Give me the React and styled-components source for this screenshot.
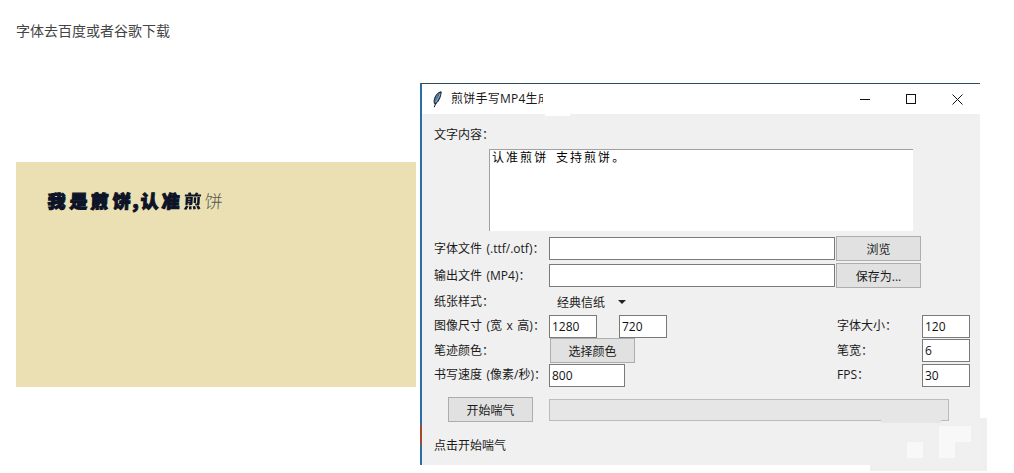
import React from "react";
import styled, { createGlobalStyle } from "styled-components";

const Global = createGlobalStyle`
  html, body { margin: 0; padding: 0; background: #fff; }
  body { font-family: "Open Sans", "Noto Sans CJK SC", sans-serif; overflow: hidden; }
  * { box-sizing: border-box; }
`;
const Page = styled.div`
  position: relative;
  width: 1014px;
  height: 473px;
  padding: 21px 0 0 16px;
  overflow: hidden;
`;
const Heading = styled.div`
  height: 18px;
  font: 14px/18px "Noto Sans CJK SC", sans-serif;
  color: #444;
`;
const Main = styled.div`
  display: flex;
  align-items: flex-start;
  gap: 4px;
  margin-top: 44px;
`;
const Paper = styled.div`
  width: 400px;
  height: 225px;
  margin-top: 79px;
  background: #ebe0b3;
  padding: 26px 0 0 27px;
  display: flex;
  font: 18px/24px "Noto Sans CJK SC", sans-serif;
  color: #0d1428;
`;
const Stroke = styled.span`
  display: inline-block;
  width: ${p => p.$w || 21.5}px;
  transform: skewX(-3deg);
  font-weight: ${p => (p.$kind === "thin" ? 300 : 900)};
  -webkit-text-stroke: ${p => (p.$kind === "heavy" ? "1.1px #0d1428" : "0")};
  ${p => p.$kind === "thin" && "color: #5a5a50;"}
  ${p => p.$kind === "partial" && `
    background: linear-gradient(to bottom, #0d1428 60%, #6b6a5c 60%);
    -webkit-background-clip: text;
    background-clip: text;
    color: transparent;
  `}
`;
const Win = styled.div`
  width: 560px;
  height: 382px;
  border-top: 1px solid #2c4c66;
  border-left: 2px solid #2a6ea6;
  background: #f0f0f0;
  font-size: 12px;
  color: #1a1a1a;
`;
const TitleBar = styled.div`
  height: 30px;
  background: #fff;
  display: flex;
  align-items: center;
  padding-left: 11px;
`;
const TitleText = styled.div`
  width: 92px;
  margin-left: 9px;
  overflow: hidden;
  white-space: nowrap;
  font-size: 12px;
  line-height: 16px;
  letter-spacing: 0.25px;
`;
const Controls = styled.div`
  margin-left: auto;
  display: flex;
`;
const Ctl = styled.svg`
  display: block;
  width: 46px;
  height: 30px;
  fill: none;
  stroke: #111;
  stroke-width: 1;
`;
const Body = styled.div`
  display: flex;
  flex-direction: column;
  padding: 12px 10px 0 12px;
`;
const Row = styled.div`
  display: flex;
  align-items: center;
  height: ${p => p.$h || 25}px;
  margin-top: ${p => p.$mt || 0}px;
`;
const Label = styled.div`
  flex: none;
  width: ${p => p.$w || 115}px;
  white-space: nowrap;
  font-size: 12px;
  line-height: 16px;
  word-spacing: 1.4px;
`;
const TextBox = styled.div`
  width: 424px;
  height: 82px;
  margin: 5px 0 0 55px;
  background: #fff;
  border-top: 1px solid #a0a0a0;
  border-left: 1px solid #a0a0a0;
  padding: 0 0 0 2px;
  font: 12px/13px "Noto Sans CJK SC", sans-serif;
  letter-spacing: 2.05px;
  word-spacing: 3px;
  color: #000;
`;
const Field = styled.div`
  flex: none;
  width: ${p => p.$w}px;
  height: 23px;
  margin-left: ${p => p.$ml || 0}px;
  background: #fff;
  border: 1px solid #7a7a7a;
  padding-left: 2px;
  font-size: 12px;
  line-height: 21px;
  color: #111;
`;
const Btn = styled.div`
  flex: none;
  width: 85px;
  height: 25px;
  margin-left: ${p => p.$ml || 0}px;
  background: #e1e1e1;
  border: 1px solid #adadad;
  display: flex;
  align-items: center;
  justify-content: center;
  font-size: 12px;
`;
const Paper2 = styled.div`
  display: flex;
  align-items: center;
  padding-left: 8px;
  gap: 13px;
  font-size: 12px;
`;
const Caret = styled.span`
  width: 0;
  height: 0;
  border-left: 4px solid transparent;
  border-right: 4px solid transparent;
  border-top: 4px solid #222;
`;
const RightGroup = styled.div`
  margin-left: auto;
  width: 133px;
  display: flex;
  align-items: center;
  justify-content: space-between;
`;
const Progress = styled.div`
  width: 400px;
  height: 22px;
  margin-left: 16px;
  background: #e6e6e6;
  border: 1px solid #bcbcbc;
`;
const Patch = styled.div`
  position: absolute;
  left: ${p => p.$x}px;
  top: ${p => p.$y}px;
  width: ${p => p.$w}px;
  height: ${p => p.$h}px;
  background: ${p => p.$c};
`;
const Feather = styled.svg`
  display: block;
  width: 9px;
  height: 17px;
`;

export default function App() {
  return (
    <Page>
      <Global />
      <Heading>字体去百度或者谷歌下载</Heading>
      <Main>
        <Paper>
          <Stroke $kind="heavy">我</Stroke>
          <Stroke $kind="heavy">是</Stroke>
          <Stroke $kind="heavy">煎</Stroke>
          <Stroke $kind="heavy" $w={20}>饼</Stroke>
          <Stroke $kind="heavy" $w={8}>,</Stroke>
          <Stroke $kind="heavy">认</Stroke>
          <Stroke $kind="heavy">准</Stroke>
          <Stroke $kind="partial">煎</Stroke>
          <Stroke $kind="thin">饼</Stroke>
        </Paper>
        <Win>
          <TitleBar>
            <Feather viewBox="0 0 9 17">
              <path d="M8.2 .8C5 1.2 2 4.5 1.2 9 .9 11.2 1.2 12.5 1.9 13 5 12 7.8 6.5 8.2 .8Z" fill="#3f78b8" stroke="#111" strokeWidth="0.9" />
              <path d="M6.4 3.5 1.2 16.2" stroke="#111" strokeWidth="1" fill="none" />
              <path d="M7 3 2.8 11.5" stroke="#fff" strokeWidth="0.7" fill="none" />
            </Feather>
            <TitleText>煎饼手写MP4生成</TitleText>
            <Controls>
              <Ctl viewBox="0 0 46 30"><path d="M18 15.5H28" /></Ctl>
              <Ctl viewBox="0 0 46 30"><rect x="18.5" y="10.5" width="9" height="9" /></Ctl>
              <Ctl viewBox="0 0 46 30"><path d="M18.5 10.5 28.5 20.5M28.5 10.5 18.5 20.5" /></Ctl>
            </Controls>
          </TitleBar>
          <Body>
            <Row $h={18}><Label>文字内容：</Label></Row>
            <TextBox>认准煎饼 支持煎饼。</TextBox>
            <Row $mt={5}>
              <Label>字体文件 (.ttf/.otf)：</Label>
              <Field $w={286} />
              <Btn $ml={1}>浏览</Btn>
            </Row>
            <Row $mt={2}>
              <Label>输出文件 (MP4)：</Label>
              <Field $w={286} />
              <Btn $ml={1}>保存为...</Btn>
            </Row>
            <Row $mt={2} $h={24}>
              <Label>纸张样式：</Label>
              <Paper2>经典信纸<Caret /></Paper2>
            </Row>
            <Row $h={24}>
              <Label>图像尺寸 (宽 x 高)：</Label>
              <Field $w={48}>1280</Field>
              <Field $w={48} $ml={22}>720</Field>
              <RightGroup><Label $w={85}>字体大小：</Label><Field $w={48}>120</Field></RightGroup>
            </Row>
            <Row>
              <Label>笔迹颜色：</Label>
              <Btn $ml={1}>选择颜色</Btn>
              <RightGroup><Label $w={85}>笔宽：</Label><Field $w={48}>6</Field></RightGroup>
            </Row>
            <Row $h={24}>
              <Label>书写速度 (像素/秒)：</Label>
              <Field $w={76}>800</Field>
              <RightGroup><Label $w={85}>FPS：</Label><Field $w={48}>30</Field></RightGroup>
            </Row>
            <Row $mt={10}>
              <Btn $ml={14}>开始喘气</Btn>
              <Progress />
            </Row>
            <Row $mt={15} $h={18}><Label>点击开始喘气</Label></Row>
          </Body>
        </Win>
      </Main>
      <Patch $x={881} $y={407} $w={60} $h={16} $c="#e6e6e6" />
      <Patch $x={980} $y={418} $w={7} $h={52} $c="#efefef" />
      <Patch $x={870} $y={465} $w={117} $h={6} $c="#efefef" />
      <Patch $x={907} $y={442} $w={16} $h={16} $c="#f8f8f8" />
      <Patch $x={939} $y={426} $w={32} $h={16} $c="#f8f8f8" />
      <Patch $x={939} $y={442} $w={16} $h={16} $c="#f8f8f8" />
      <Patch $x={420} $y={425} $w={2} $h={20} $c="#a04a30" />
      <Patch $x={545} $y={114} $w={25} $h={2} $c="#fff" />
    </Page>
  );
}
